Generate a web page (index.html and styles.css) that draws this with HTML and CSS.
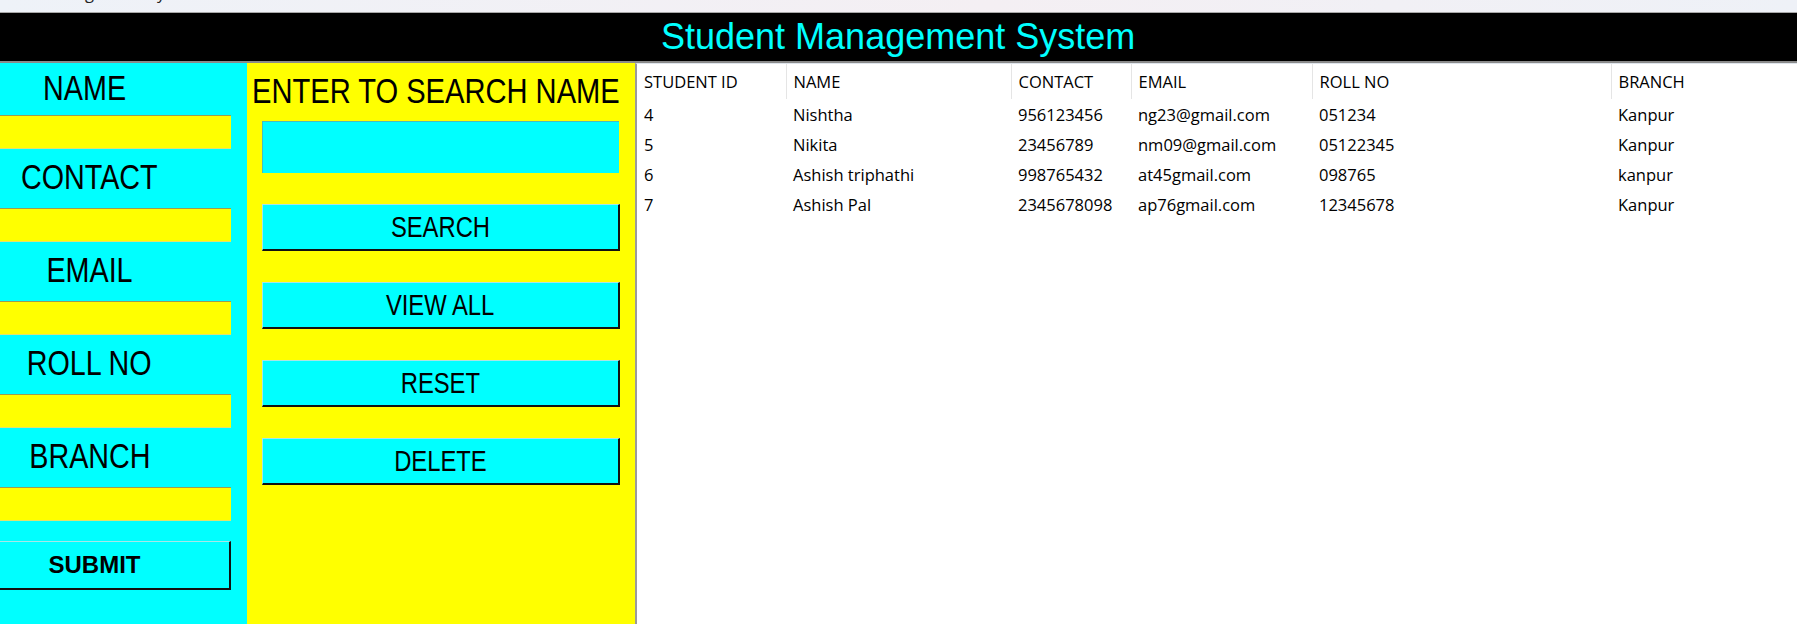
FILE: index.html
```html
<!DOCTYPE html>
<html lang="en">
<head>
<meta charset="utf-8">
<title>Student Management System</title>
<link rel="stylesheet" href="styles.css">
</head>
<body>
<div class="titlebar"><span class="wintitle">Student Management System</span></div>
<header class="header"><h1 class="app-title">Student Management System</h1></header>
<main class="main">
  <section class="form-panel">
    <div class="field"><div class="label label-name"><span class="narrow">NAME</span></div><div class="entry"></div></div>
    <div class="field"><div class="label"><span class="narrow">CONTACT</span></div><div class="entry"></div></div>
    <div class="field"><div class="label"><span class="narrow">EMAIL</span></div><div class="entry"></div></div>
    <div class="field"><div class="label"><span class="narrow">ROLL NO</span></div><div class="entry"></div></div>
    <div class="field"><div class="label"><span class="narrow">BRANCH</span></div><div class="entry"></div></div>
    <button class="submit">SUBMIT</button>
  </section>
  <section class="search-panel">
    <div class="search-title"><span class="narrow narrow-left">ENTER TO SEARCH NAME</span></div>
    <div class="search-entry"></div>
    <button class="btn"><span class="narrow">SEARCH</span></button>
    <button class="btn"><span class="narrow">VIEW ALL</span></button>
    <button class="btn"><span class="narrow">RESET</span></button>
    <button class="btn"><span class="narrow">DELETE</span></button>
  </section>
  <section class="table-panel">
    <table class="grid">
      <colgroup>
        <col class="c-id"><col class="c-name"><col class="c-contact"><col class="c-email"><col class="c-roll"><col class="c-branch">
      </colgroup>
      <thead>
        <tr><th>STUDENT ID</th><th>NAME</th><th>CONTACT</th><th>EMAIL</th><th>ROLL NO</th><th>BRANCH</th></tr>
      </thead>
      <tbody>
        <tr><td>4</td><td>Nishtha</td><td>956123456</td><td>ng23@gmail.com</td><td>051234</td><td>Kanpur</td></tr>
        <tr><td>5</td><td>Nikita</td><td>23456789</td><td>nm09@gmail.com</td><td>05122345</td><td>Kanpur</td></tr>
        <tr><td>6</td><td>Ashish triphathi</td><td>998765432</td><td>at45gmail.com</td><td>098765</td><td>kanpur</td></tr>
        <tr><td>7</td><td>Ashish Pal</td><td>2345678098</td><td>ap76gmail.com</td><td>12345678</td><td>Kanpur</td></tr>
      </tbody>
    </table>
  </section>
</main>
</body>
</html>
```

FILE: styles.css
```css
* { box-sizing: border-box; margin: 0; padding: 0; }
html, body { width: 1797px; height: 624px; overflow: hidden; background: #ffffff; }
body { font-family: "Liberation Sans", Arial, sans-serif; }

.titlebar {
  height: 13px;
  overflow: hidden;
  background: linear-gradient(90deg, #eef2f8 0%, #f4eff3 55%, #eef1f7 100%);
  border-bottom: 1px solid #a8a8a8;
}
.wintitle {
  display: block;
  white-space: nowrap;
  font-family: "Segoe UI", "Open Sans", sans-serif;
  font-size: 16.5px;
  line-height: 16.5px;
  margin-top: -14.6px;
  margin-left: -23px;
  color: #222222;
}

.header {
  height: 50px;
  background: #000000;
  border-bottom: 2px solid #8a8a8a;
  display: flex;
  align-items: center;
  padding-left: 661px;
}
.app-title {
  font-family: "Liberation Sans", Arial, sans-serif;
  font-weight: normal;
  font-size: 36px;
  line-height: 1;
  color: #00ffff;
}

.main { display: flex; height: 561px; }

/* Arial Narrow look: Arial metrics squeezed to 82% width */
.narrow {
  display: inline-block;
  white-space: nowrap;
  transform: scaleX(0.82);
  transform-origin: center center;
}
.narrow-left { transform-origin: left center; }

.form-panel {
  width: 247px;
  flex: none;
  background: #00ffff;
  display: flex;
  flex-direction: column;
}
.label {
  width: 179px;
  height: 59px;
  padding-bottom: 3px;
  display: flex;
  align-items: center;
  justify-content: center;
  font-family: "Liberation Sans", Arial, sans-serif;
  font-size: 35px;
  color: #000000;
}
.field:first-child .label { height: 52px; }
.label-name { padding-right: 9px; }
.entry {
  width: 231px;
  height: 34px;
  background: #ffff00;
  border-top: 1px solid #9c9c50;
  border-bottom: 1px solid #e2e270;
}
.submit {
  margin-top: 20px;
  width: 231px;
  height: 49px;
  background: #00ffff;
  border: none;
  border-top: 1px solid #a8e6e6;
  border-right: 2px solid #111111;
  border-bottom: 2px solid #111111;
  font-family: "Liberation Sans", Arial, sans-serif;
  font-weight: bold;
  font-size: 24px;
  color: #000000;
  padding-right: 40px;
}

.search-panel {
  width: 388px;
  flex: none;
  background: #ffff00;
  display: flex;
  flex-direction: column;
  overflow: hidden;
}
.search-title {
  height: 58px;
  padding-left: 5px;
  padding-bottom: 2px;
  display: flex;
  align-items: center;
  font-family: "Liberation Sans", Arial, sans-serif;
  font-size: 35.5px;
  color: #000000;
}
.search-entry {
  flex: none;
  margin-left: 15px;
  width: 357px;
  height: 52px;
  background: #00ffff;
  border-top: 1px solid #4cbcbc;
  border-left: 1px solid #4cbcbc;
}
.btn {
  flex: none;
  margin-left: 15px;
  margin-top: 31px;
  width: 358px;
  height: 47px;
  background: #00ffff;
  border: none;
  border-top: 1px solid #a8e6e6;
  border-left: 1px solid #a8e6e6;
  border-right: 2px solid #111111;
  border-bottom: 2px solid #111111;
  font-family: "Liberation Sans", Arial, sans-serif;
  font-size: 29px;
  color: #000000;
}

.table-panel {
  flex: 1;
  background: #ffffff;
  border-left: 2px solid #9a9a9a;
  border-top: 1px solid #dfe5ec;
}
.grid {
  table-layout: fixed;
  border-collapse: collapse;
  width: 100%;
  font-family: "Segoe UI", "Open Sans", sans-serif;
  font-size: 16.5px;
  color: #000000;
}
.c-id { width: 149px; }
.c-name { width: 225px; }
.c-contact { width: 120px; }
.c-email { width: 181px; }
.c-roll { width: 299px; }
.grid th {
  height: 35px;
  font-weight: normal;
  text-align: left;
  padding-left: 7px;
  border-right: 1px solid #e5e5e5;
  white-space: nowrap;
}
.grid th:last-child { border-right: none; }
.grid td {
  height: 30px;
  padding-left: 7px;
  white-space: nowrap;
}
```
